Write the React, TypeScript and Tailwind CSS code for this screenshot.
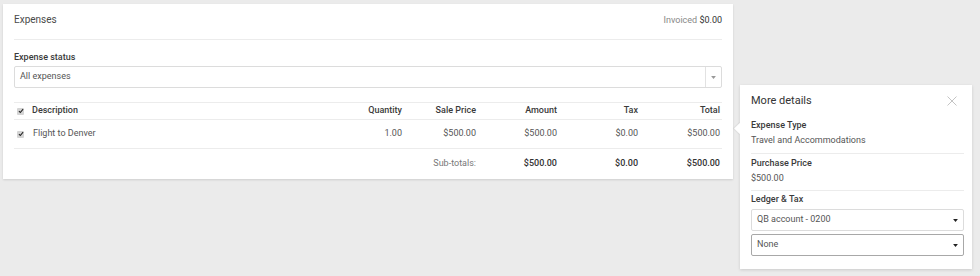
const rows = [
  { description: "Flight to Denver", quantity: "1.00", salePrice: "$500.00", amount: "$500.00", tax: "$0.00", total: "$500.00" },
]

function Check() {
  return (
    <span className="flex h-[7px] w-[7px] items-center justify-center rounded-[1px] bg-[#d4d4d4]">
      <svg viewBox="0 0 8 8" className="h-[6px] w-[6px]">
        <path d="M1.2 4.2 L3.1 6 L6.8 1.6" fill="none" stroke="#222" strokeWidth="1.4" />
      </svg>
    </span>
  )
}

function Caret() {
  return (
    <svg viewBox="0 0 8 5" className="h-[3px] w-[5px]">
      <path d="M0 0 L8 0 L4 5 Z" fill="#222" />
    </svg>
  )
}

function ExpensesCard() {
  return (
    <div className="ml-[3px] mt-[4px] w-[730px] bg-white px-[11px] pt-[8px] shadow-[0_1px_2px_rgba(0,0,0,0.12)]">
      <div className="flex items-center justify-between border-b border-[#ececec] pb-[11px]">
        <div className="text-[10px] leading-[16px] text-[#4a4a4a]">Expenses</div>
        <div className="text-[9px] leading-[16px] text-[#888]">
          Invoiced <span className="text-[#333]">$0.00</span>
        </div>
      </div>

      <div className="mt-[11px] text-[9px] font-medium leading-[13px] text-[#3a3a3a]">Expense status</div>
      <div className="mt-[2px] flex h-[22px] items-stretch rounded-[2px] border border-[#dcdcdc]">
        <div className="flex flex-1 items-center pl-[5px] text-[9px] text-[#555]">All expenses</div>
        <div className="flex w-[16px] items-center justify-center border-l border-[#e2e2e2]">
          <svg viewBox="0 0 8 5" className="h-[3px] w-[5px]">
            <path d="M0 0 L8 0 L4 5 Z" fill="#999" />
          </svg>
        </div>
      </div>

      <div className="mt-[14px] text-[9px]">
        <div className="flex h-[18px] items-center border-y border-[#ececec] font-medium text-[#3a3a3a]">
          <div className="w-[18px] pl-[3px]"><Check /></div>
          <div className="flex-1">Description</div>
          <div className="w-[80px] pr-[2px] text-right">Quantity</div>
          <div className="w-[74px] pr-[2px] text-right">Sale Price</div>
          <div className="w-[81px] pr-[2px] text-right">Amount</div>
          <div className="w-[81px] pr-[2px] text-right">Tax</div>
          <div className="w-[82px] pr-[2px] text-right">Total</div>
        </div>
        {rows.map((r) => (
          <div key={r.description} className="flex h-[29px] items-center border-b border-[#ececec] text-[#555]">
            <div className="w-[19px] pl-[3px]"><Check /></div>
            <div className="flex-1">{r.description}</div>
            <div className="w-[80px] pr-[2px] text-right">{r.quantity}</div>
            <div className="w-[74px] pr-[2px] text-right">{r.salePrice}</div>
            <div className="w-[81px] pr-[2px] text-right">{r.amount}</div>
            <div className="w-[81px] pr-[2px] text-right">{r.tax}</div>
            <div className="w-[82px] pr-[2px] text-right">{r.total}</div>
          </div>
        ))}
        <div className="flex h-[30px] items-center">
          <div className="flex-1" />
          <div className="w-[74px] pr-[2px] text-right text-[#777]">Sub-totals:</div>
          <div className="w-[81px] pr-[2px] text-right font-medium text-[#333]">$500.00</div>
          <div className="w-[81px] pr-[2px] text-right font-medium text-[#333]">$0.00</div>
          <div className="w-[82px] pr-[2px] text-right font-medium text-[#333]">$500.00</div>
        </div>
      </div>
    </div>
  )
}

function DetailsPopover() {
  return (
    <div className="relative ml-[7px] mt-[85px] w-[232px] bg-white pb-[13px] pl-[11px] pr-[8px] pt-[8px] shadow-[0_1px_3px_rgba(0,0,0,0.14)]">
      <div className="absolute left-[-4px] top-[39px] h-[9px] w-[9px] rotate-45 bg-white shadow-[-1px_1px_1px_rgba(0,0,0,0.06)]" />
      <div className="relative flex items-center justify-between">
        <div className="text-[11px] leading-[16px] text-[#333]">More details</div>
        <svg viewBox="0 0 10 10" className="mr-[7px] h-[10px] w-[10px]">
          <path d="M0.5 0.5 L9.5 9.5 M9.5 0.5 L0.5 9.5" stroke="#c4c4c4" strokeWidth="1" fill="none" />
        </svg>
      </div>

      <div className="relative border-b border-[#ececec] pb-[6px]">
        <div className="mt-[10px] text-[9px] font-medium leading-[13px] text-[#3a3a3a]">Expense Type</div>
        <div className="mt-[2px] text-[9px] leading-[13px] text-[#555]">Travel and Accommodations</div>
      </div>

      <div className="border-b border-[#ececec] pb-[5px] pt-[3px]">
        <div className="text-[9px] font-medium leading-[13px] text-[#3a3a3a]">Purchase Price</div>
        <div className="mt-[2px] text-[9px] leading-[13px] text-[#555]">$500.00</div>
      </div>

      <div className="pt-[2px]">
        <div className="text-[9px] font-medium leading-[13px] text-[#3a3a3a]">Ledger &amp; Tax</div>
        <div className="mt-[3px] flex h-[22px] items-center justify-between rounded-[2px] border border-[#dcdcdc] pl-[5px] pr-[5px] text-[9px] text-[#555]">
          <span>QB account - 0200</span>
          <Caret />
        </div>
        <div className="mt-[3px] flex h-[22px] items-center justify-between rounded-[2px] border border-[#a8a8a8] pl-[5px] pr-[5px] text-[9px] text-[#555]">
          <span>None</span>
          <Caret />
        </div>
      </div>
    </div>
  )
}

export default function App() {
  return (
    <div className="flex h-[276px] w-[980px] items-start bg-[#ebebeb] font-['Roboto',sans-serif]">
      <ExpensesCard />
      <DetailsPopover />
    </div>
  )
}
